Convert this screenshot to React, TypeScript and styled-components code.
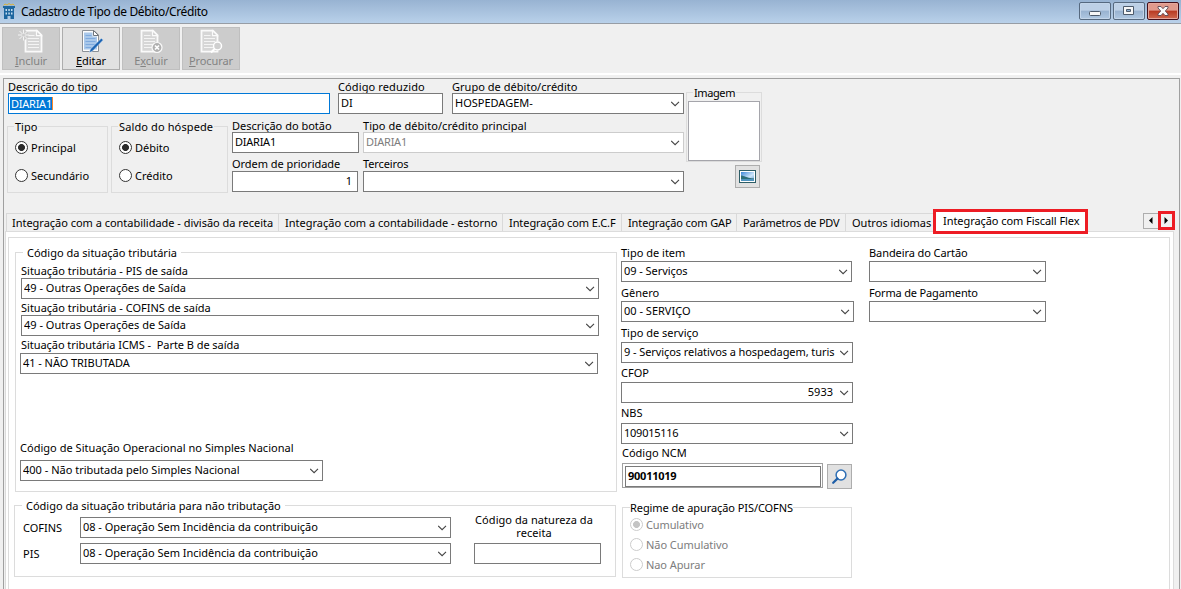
import React from 'react';
import styled, { createGlobalStyle, css } from 'styled-components';

const Global = createGlobalStyle`
  *, *::before, *::after { box-sizing: border-box; }
  html, body { margin: 0; padding: 0; overflow: hidden; }
  body { font: 11px/14px "Noto Sans", "Open Sans", sans-serif; color: #000; background: #f0f0f0; }
`;

const Window = styled.div`
  width: 1181px;
  height: 589px;
  overflow: hidden;
  display: flex;
  flex-direction: column;
  background: #f0f0f0;
`;

const TitleBar = styled.header`
  height: 24px;
  flex: none;
  display: flex;
  align-items: flex-start;
  padding: 2px 2px 0 3px;
  background: linear-gradient(#98b3d2, #b9d1ea);
  border-bottom: 1px solid #979da5;
`;

const Title = styled.h1`
  margin: 0 auto 0 6px;
  font-size: 12px;
  line-height: 20px;
  font-weight: 400;
  letter-spacing: -0.36px;
`;

const CaptionButton = styled.button<{ $close?: boolean }>`
  width: 32px;
  height: 18px;
  margin-left: 2px;
  padding: 0;
  display: flex;
  align-items: center;
  justify-content: center;
  border: 1px solid ${p => (p.$close ? '#43101a' : '#56697f')};
  border-radius: 2px;
  box-shadow: inset 0 0 0 1px ${p => (p.$close ? '#e5a79c' : '#c3d5e9')};
  background: ${p => (p.$close
    ? 'linear-gradient(#e09a8c 0 45%, #b83a22 50%, #cf6a50)'
    : 'linear-gradient(#bdd0e6 0 45%, #98b2d0 50%, #b0c8e2)')};
`;

const Toolbar = styled.nav`
  height: 49px;
  flex: none;
  display: flex;
  gap: 2px;
  padding: 3px 2px;
`;

const ToolButton = styled.button<{ $off?: boolean }>`
  width: 58px;
  height: 43px;
  padding: 1px 0 0;
  display: flex;
  flex-direction: column;
  align-items: center;
  font: inherit;
  letter-spacing: -0.1px;
  border: 1px solid ${p => (p.$off ? '#bfbfbf' : '#adadad')};
  background: ${p => (p.$off ? '#cccccc' : '#e1e1e1')};
  color: ${p => (p.$off ? '#838383' : '#000')};
  svg { flex: none; }
`;

const Rule = styled.div`
  height: 2px;
  flex: none;
  background: #fff;
`;

const Body = styled.main`
  flex: 1;
  min-height: 0;
  margin: 3px 1px 0 3px;
  border: 1px solid #a0a0a0;
  border-bottom: 0;
  display: flex;
  flex-direction: column;
`;

const FormHead = styled.section`
  height: 134px;
  flex: none;
  display: flex;
  padding: 1px 0 0 4px;
`;

const Col = styled.div<{ $w?: number; $ml?: number; $mt?: number }>`
  display: flex;
  flex-direction: column;
  align-items: flex-start;
  flex: none;
  width: ${p => (p.$w ? `${p.$w}px` : 'auto')};
  margin-left: ${p => p.$ml ?? 0}px;
  margin-top: ${p => p.$mt ?? 0}px;
`;

const Row = styled.div<{ $gap?: number; $mt?: number; $ml?: number }>`
  display: flex;
  align-items: flex-start;
  gap: ${p => p.$gap ?? 0}px;
  margin-top: ${p => p.$mt ?? 0}px;
  margin-left: ${p => p.$ml ?? 0}px;
`;

const Label = styled.label<{ $ls?: number; $gap?: number; $ml?: number }>`
  display: block;
  height: 13px;
  line-height: 13px;
  white-space: pre;
  letter-spacing: ${p => p.$ls ?? 0}px;
  margin-bottom: ${p => p.$gap ?? 0}px;
  margin-left: ${p => p.$ml ?? 0}px;
`;

const Box = styled.div<{ $w: number; $focus?: boolean; $off?: boolean; $right?: boolean; $ls?: number; $bold?: boolean }>`
  width: ${p => p.$w}px;
  height: 21px;
  flex: none;
  display: flex;
  align-items: center;
  padding: 0 ${p => (p.$right ? 5 : 3)}px 1px 2px;
  background: #fff;
  border: 1px solid ${p => (p.$focus ? '#0078d7' : p.$off ? '#cccccc' : '#7a7a7a')};
  color: ${p => (p.$off ? '#7d7d7d' : '#000')};
  letter-spacing: ${p => p.$ls ?? 0}px;
  white-space: pre;
  ${p => p.$right && css`justify-content: flex-end;`}
  ${p => p.$bold && css`font-weight: 700;`}
  svg { flex: none; margin-top: 1px; }
`;

const Value = styled.span<{ $right?: boolean }>`
  flex: 1;
  min-width: 0;
  overflow: hidden;
  text-align: ${p => (p.$right ? 'right' : 'left')};
  padding-right: ${p => (p.$right ? 7 : 0)}px;
`;

const Selection = styled.span`
  height: 13px;
  line-height: 13px;
  padding-left: 1px;
  margin-left: -1px;
  color: #fff;
  background: #0078d7;
  border-right: 1px solid #ff8728;
`;

const Group = styled.fieldset<{ $w: number; $h: number; $ml?: number; $mt?: number }>`
  width: ${p => p.$w}px;
  height: ${p => p.$h}px;
  min-width: 0;
  flex: none;
  margin: ${p => p.$mt ?? 0}px 0 0 ${p => p.$ml ?? 0}px;
  padding: 0;
  border: 1px solid #dcdcdc;
  display: flex;
  flex-direction: column;
  align-items: flex-start;
`;

const Legend = styled.div<{ $bg: string; $pad: number; $ml: number; $ls?: number }>`
  height: 14px;
  line-height: 14px;
  flex: none;
  margin: -7px 0 0 ${p => p.$ml}px;
  padding: 0 ${p => p.$pad}px;
  background: ${p => p.$bg};
  white-space: pre;
  letter-spacing: ${p => p.$ls ?? 0}px;
`;

const RadioRow = styled.label<{ $mt: number; $off?: boolean; $ls?: number }>`
  display: flex;
  align-items: center;
  gap: 3px;
  height: 13px;
  line-height: 13px;
  margin: ${p => p.$mt}px 0 0 7px;
  color: ${p => (p.$off ? '#7d7d7d' : '#000')};
  letter-spacing: ${p => p.$ls ?? 0}px;
`;

const Dot = styled.span<{ $on?: boolean; $off?: boolean }>`
  width: 13px;
  height: 13px;
  flex: none;
  border-radius: 50%;
  border: 1px solid ${p => (p.$off ? '#cccccc' : '#333333')};
  background: ${p => (p.$on ? `radial-gradient(circle, ${p.$off ? '#c4c4c4' : '#2b2b2b'} 3.1px, #fff 3.8px)` : '#fff')};
`;

const Picture = styled.div`
  width: 72px;
  height: 60px;
  margin: 1px 0 0 1px;
  flex: none;
  background: #fff;
  border: 1px solid #a5a5ab;
`;

const SquareButton = styled.button<{ $h?: number; $ml?: number; $mt?: number }>`
  width: 25px;
  height: ${p => p.$h ?? 25}px;
  margin: ${p => p.$mt ?? 0}px 0 0 ${p => p.$ml ?? 0}px;
  padding: 0;
  display: flex;
  align-items: center;
  justify-content: center;
  background: #e1e1e1;
  border: 1px solid #adadad;
`;

const TabStrip = styled.div`
  height: 18px;
  flex: none;
  display: flex;
  align-items: flex-start;
  margin: 0 4px 0 2px;
`;

const Tab = styled.div<{ $w: number; $ls?: number; $pad?: number }>`
  width: ${p => p.$w}px;
  height: 18px;
  flex: none;
  padding-left: ${p => p.$pad ?? 6}px;
  padding-top: 2px;
  border-top: 1px solid #d9d9d9;
  border-left: 1px solid #d9d9d9;
  letter-spacing: ${p => p.$ls ?? 0}px;
  white-space: pre;
`;

const ActiveTab = styled.div`
  width: 155px;
  height: 25px;
  flex: none;
  margin: -4px 55px 0 -1px;
  position: relative;
  z-index: 1;
  padding: 2px 0 0 7px;
  border: 3px solid #ed1c24;
  background: #fff;
  letter-spacing: -0.06px;
  white-space: pre;
`;

const Spin = styled.button<{ $marked?: boolean }>`
  width: ${p => (p.$marked ? 17 : 15)}px;
  height: ${p => (p.$marked ? 19 : 16)}px;
  margin-top: ${p => (p.$marked ? -2 : 0)}px;
  padding: 0 1px 0 0;
  flex: none;
  display: flex;
  align-items: center;
  justify-content: center;
  background: #f0f0f0;
  border: ${p => (p.$marked ? '3px solid #ed1c24' : '1px solid #adadad')};
  border-right-width: ${p => (p.$marked ? 3 : 0)}px;
  svg { margin-top: -1px; }
`;

const Page = styled.section`
  flex: 1;
  min-height: 0;
  margin: 0 5px 0 1px;
  padding: 5px 3px 0 2px;
  background: #fff;
  border: 1px solid #dcdcdc;
  border-bottom: 0;
  display: flex;
`;

const Sheet = styled.div`
  flex: 1;
  min-width: 0;
  display: flex;
  align-items: flex-start;
  border: 1px solid #dcdcdc;
  border-bottom: 0;
`;

const Centered = styled.div`
  width: 127px;
  height: 26px;
  margin-bottom: 4px;
  padding-right: 7px;
  line-height: 13px;
  text-align: center;
  letter-spacing: 0.06px;
  white-space: pre;
`;

const NcmFrame = styled.div`
  width: 201px;
  height: 25px;
  padding: 2px 0 0 2px;
  border: 1px solid #a0a0a0;
`;

const Chevron = () => (
  <svg width="9" height="6" viewBox="0 0 9 6">
    <path d="M0.200 0.800 L4.100 4.700 L8 0.800" fill="none" stroke="#444" strokeWidth="1.100" />
  </svg>
);

const Combo = ({ w, value = '', off, right, ls }: { w: number; value?: string; off?: boolean; right?: boolean; ls?: number }) => (
  <Box $w={w} $off={off} $ls={ls}>
    <Value $right={right}>{value}</Value>
    <Chevron />
  </Box>
);

const Radio = ({ text, on, off, mt, ls }: { text: string; on?: boolean; off?: boolean; mt: number; ls?: number }) => (
  <RadioRow $mt={mt} $off={off} $ls={ls}>
    <Dot $on={on} $off={off} />
    {text}
  </RadioRow>
);

const BuildingIcon = () => (
  <svg width="12" height="17" viewBox="0 0 12 17">
    <path d="M0.500 3.500 L2 2 L4 3 L6 1.500 L8 3 L10 2 L11.500 3.500" fill="none" stroke="#d8b23c" strokeWidth="1" />
    <path d="M0 4h12v2h-1v11H7.500v-3h-3v3H1V6H0z" fill="#1d669f" />
    <path d="M2.500 7h1.500v2H2.500zM5.300 7h1.500v2H5.300zM8 7h1.500v2H8zM2.500 10.500h1.500v2H2.500zM5.300 10.500h1.500v2H5.300zM8 10.500h1.500v2H8z" fill="#c5dcf0" />
  </svg>
);

const ActiveDoc = () => (
  <svg width="28" height="25" viewBox="0 0 28 25">
    <path d="M5.500 1.500h11.500l4.500 4.500v16.500H5.500z" fill="#fdfdfd" stroke="#8b9096" />
    <path d="M7 3.500h8.500v4h4.500V20.500H7z" fill="#a9c8ea" />
    <path d="M16.500 1.500v5H21.500z" fill="#fff" stroke="#6f757c" />
    <path d="M8.500 6.500h6M8.500 9.500h10M8.500 12.500h10M8.500 15.500h10M8.500 18.500h6" stroke="#7faade" />
    <path d="M12 23.800l1.500-3.800L24.300 9.200l2 1.800L15.700 22z" fill="#1e66b4" stroke="#e9f1fa" strokeWidth="0.500" />
  </svg>
);

const MutedDoc = ({ shift = 0, children }: { shift?: number; children?: React.ReactNode }) => (
  <svg width="28" height="25" viewBox="0 0 28 25">
    <g transform={`translate(${shift} 0)`}>
      <path d="M4.500 1.700h11.500l4.500 4.500v16.500h-16z" fill="#d6d6d6" stroke="#fafafa" strokeWidth="1.800" />
      <path d="M15.500 1.700v5h5z" fill="#d0d0d0" stroke="#fafafa" strokeWidth="1.200" />
      <path d="M7 6.500h6.500M7 9.500h11M7 12.500h11M7 15.500h11M7 18.500h11" stroke="#f4f4f4" />
    </g>
    {children}
  </svg>
);

const PictureIcon = () => (
  <svg width="17" height="13" viewBox="0 0 17 13">
    <defs>
      <linearGradient id="sky" x1="0" y1="0" x2="1" y2="1">
        <stop offset="0" stopColor="#3b86d8" />
        <stop offset="0.600" stopColor="#cfe6fa" />
        <stop offset="1" stopColor="#5a9ad0" />
      </linearGradient>
    </defs>
    <rect x="0.500" y="0.500" width="16" height="12" fill="#fff" stroke="#2d5d66" />
    <rect x="2" y="2" width="13" height="9" fill="url(#sky)" />
    <path d="M2 5.500c3 0 5 2.500 13 3V11H2z" fill="#2c6e78" />
    <path d="M2 9h13v2H2z" fill="#4f93bd" />
  </svg>
);

const LensIcon = () => (
  <svg width="15" height="15" viewBox="0 0 15 15">
    <circle cx="9" cy="6" r="4.900" fill="#fff" stroke="#2e6fb5" strokeWidth="1.500" />
    <path d="M5.400 9.600L1.200 13.800" stroke="#1f5fa8" strokeWidth="2.200" strokeLinecap="round" />
  </svg>
);

export default function App() {
  return (
    <Window>
      <Global />
      <TitleBar>
        <BuildingIcon />
        <Title>Cadastro de Tipo de Débito/Crédito</Title>
        <CaptionButton>
          <svg width="12" height="14" viewBox="0 0 12 14"><rect x="0.500" y="7.500" width="11" height="4" rx="1" fill="#f7f7f7" stroke="#4d5a6b" /></svg>
        </CaptionButton>
        <CaptionButton>
          <svg width="12" height="10" viewBox="0 0 12 10"><path d="M0.500 0.500h10v8h-10z" fill="#f7f7f7" stroke="#4d5a6b" /><path d="M3.500 3.500h4v2h-4z" fill="#8fb0d4" stroke="#4d5a6b" /></svg>
        </CaptionButton>
        <CaptionButton $close>
          <svg width="12" height="10" viewBox="0 0 12 10"><path d="M1 0.500h3L6 2.700 8 0.500h3v1.500L8.300 5 11 8v1.500H8L6 7.300 4 9.500H1V8L3.700 5 1 2z" fill="#fafafa" stroke="#5c4650" strokeWidth="0.900" /></svg>
        </CaptionButton>
      </TitleBar>
      <Toolbar>
        <ToolButton $off>
          <MutedDoc shift={4}>
            <circle cx="6.500" cy="6" r="5" fill="#ccc" />
            <path d="M6.500 0.500v11M1 6h11M2.500 2l8 8M10.500 2l-8 8" stroke="#f4f4f4" />
            <circle cx="6.500" cy="6" r="1.500" fill="#ccc" />
          </MutedDoc>
          <span><u>I</u>ncluir</span>
        </ToolButton>
        <ToolButton>
          <ActiveDoc />
          <span><u>E</u>ditar</span>
        </ToolButton>
        <ToolButton $off>
          <MutedDoc><circle cx="20" cy="18.500" r="5" fill="#b0b0b0" stroke="#fafafa" strokeWidth="1.200" /><path d="M18 16.500l4 4M22 16.500l-4 4" stroke="#fff" strokeWidth="1.700" /></MutedDoc>
          <span>E<u>x</u>cluir</span>
        </ToolButton>
        <ToolButton $off>
          <MutedDoc><circle cx="20.500" cy="17" r="4.800" fill="#ccc" /><circle cx="20.500" cy="17" r="4" fill="#cfcfcf" stroke="#fff" strokeWidth="1.500" /><path d="M17.500 20l-3.500 3.500" stroke="#fff" strokeWidth="2" /></MutedDoc>
          <span><u>P</u>rocurar</span>
        </ToolButton>
      </Toolbar>
      <Rule />
      <Body>
        <FormHead>
          <Col $w={676}>
            <Row>
              <Col $w={322}>
                <Label>Descrição do tipo</Label>
                <Box $w={322} $focus $ls={-0.25}><Selection>DIARIA1</Selection></Box>
              </Col>
              <Col $ml={8}>
                <Label $ls={0.12}>Código reduzido</Label>
                <Box $w={105}>DI</Box>
              </Col>
              <Col $ml={9}>
                <Label $ls={0.03}>Grupo de débito/crédito</Label>
                <Combo w={232} value="HOSPEDAGEM-" />
              </Col>
            </Row>
            <Row>
              <Group $w={101} $h={67} $ml={-1} $mt={12}>
                <Legend $bg="#f0f0f0" $pad={1} $ml={6}>Tipo</Legend>
                <Radio text="Principal" on mt={7} />
                <Radio text="Secundário" mt={15} />
              </Group>
              <Group $w={117} $h={67} $ml={3} $mt={12}>
                <Legend $bg="#f0f0f0" $pad={1} $ml={6} $ls={0.12}>Saldo do hóspede</Legend>
                <Radio text="Débito" on mt={7} />
                <Radio text="Crédito" mt={15} />
              </Group>
              <Col $ml={4} $mt={5}>
                <Label>Descrição do botão</Label>
                <Box $w={127} $ls={-0.25}>DIARIA1</Box>
                <Row $mt={4}><Label $gap={1} $ls={-0.04}>Ordem de prioridade</Label></Row>
                <Box $w={126} $right>1</Box>
              </Col>
              <Col $ml={4} $mt={5}>
                <Label $ls={0.05}>Tipo de débito/crédito principal</Label>
                <Combo w={321} value="DIARIA1" off ls={-0.25} />
                <Row $mt={4}><Label $gap={1} $ls={-0.12}>Terceiros</Label></Row>
                <Combo w={321} />
              </Col>
            </Row>
          </Col>
          <Col $ml={2}>
            <Group $w={76} $h={70} $mt={12}>
              <Legend $bg="#f0f0f0" $pad={1} $ml={6} $ls={-0.4}>Imagem</Legend>
              <Picture />
            </Group>
            <SquareButton $h={23} $ml={49} $mt={3}><PictureIcon /></SquareButton>
          </Col>
        </FormHead>
        <TabStrip>
          <Tab $w={272} $ls={-0.02} $pad={5}>Integração com a contabilidade - divisão da receita</Tab>
          <Tab $w={224}>Integração com a contabilidade - estorno</Tab>
          <Tab $w={119} $ls={-0.08}>Integração com E.C.F</Tab>
          <Tab $w={115} $ls={-0.12}>Integração com GAP</Tab>
          <Tab $w={109} $ls={-0.2}>Parâmetros de PDV</Tab>
          <Tab $w={89}>Outros idiomas</Tab>
          <ActiveTab>Integração com Fiscall Flex</ActiveTab>
          <Spin><svg width="4" height="7" viewBox="0 0 4 7"><path d="M3.500 0v7L0 3.500z" /></svg></Spin>
          <Spin $marked><svg width="4" height="7" viewBox="0 0 4 7"><path d="M0.500 0v7L4 3.500z" /></svg></Spin>
        </TabStrip>
        <Page>
          <Sheet>
            <Col $w={602} $ml={5}>
              <Group $w={602} $h={240} $ml={1} $mt={14}>
                <Legend $bg="#fff" $pad={4} $ml={7}>Código da situação tributária</Legend>
                <Col $ml={4} $mt={4}>
                  <Label $ml={1} $gap={1}>Situação tributária - PIS de saída</Label>
                  <Row $ml={1}><Combo w={578} value="49 - Outras Operações de Saída" /></Row>
                  <Row $mt={2} $ml={1}><Label $gap={1}>Situação tributária - COFINS de saída</Label></Row>
                  <Row $ml={1}><Combo w={578} value="49 - Outras Operações de Saída" /></Row>
                  <Row $mt={2} $ml={1}><Label $gap={2} $ls={-0.05}>Situação tributária ICMS -  Parte B de saída</Label></Row>
                  <Combo w={578} value="41 - NÃO TRIBUTADA" ls={-0.05} />
                  <Row $mt={67}><Label $gap={6} $ls={0.03}>Código de Situação Operacional no Simples Nacional</Label></Row>
                  <Combo w={303} value="400 - Não tributada pelo Simples Nacional" />
                </Col>
              </Group>
              <Group $w={602} $h={72} $mt={13}>
                <Legend $bg="#fff" $pad={4} $ml={7}>Código da situação tributária para não tributação</Legend>
                <Row $ml={8} $mt={4}>
                  <Col $w={57} $mt={4}>
                    <Label $gap={13}>COFINS</Label>
                    <Label>PIS</Label>
                  </Col>
                  <Col>
                    <Combo w={371} value="08 - Operação Sem Incidência da contribuição" ls={-0.03} />
                    <Row $mt={5}><Combo w={371} value="08 - Operação Sem Incidência da contribuição" ls={-0.03} /></Row>
                  </Col>
                  <Col $ml={23} $mt={-4}>
                    <Centered>{'Código da natureza da\nreceita'}</Centered>
                    <Box $w={127} />
                  </Col>
                </Row>
              </Group>
            </Col>
            <Col $w={233} $ml={5} $mt={8}>
              <Label $gap={2}>Tipo de item</Label>
              <Combo w={231} value="09 - Serviços" ls={-0.06} />
              <Row $mt={4}><Label $gap={2}>Gênero</Label></Row>
              <Combo w={233} value="00 - SERVIÇO" />
              <Row $mt={4}><Label $gap={3}>Tipo de serviço</Label></Row>
              <Combo w={232} value="9 - Serviços relativos a hospedagem, turis" ls={-0.08} />
              <Row $mt={3}><Label $gap={3}>CFOP</Label></Row>
              <Combo w={232} value="5933" right />
              <Row $mt={3}><Label $gap={4}>NBS</Label></Row>
              <Combo w={232} value="109015116" ls={-0.25} />
              <Row $mt={2} $ml={1}><Label $gap={4}>Código NCM</Label></Row>
              <Row $ml={1} $gap={4}>
                <NcmFrame><Box $w={196} $bold $ls={-0.25}>90011019</Box></NcmFrame>
                <SquareButton $mt={1}><LensIcon /></SquareButton>
              </Row>
              <Group $w={230} $h={71} $ml={1} $mt={18}>
                <Legend $bg="#fff" $pad={0} $ml={7} $ls={-0.07}>Regime de apuração PIS/COFNS</Legend>
                <Radio text="Cumulativo" on off mt={3} ls={-0.12} />
                <Radio text="Não Cumulativo" off mt={7} ls={-0.06} />
                <Radio text="Nao Apurar" off mt={7} ls={-0.08} />
              </Group>
            </Col>
            <Col $ml={15} $mt={8}>
              <Label $gap={2} $ls={-0.08}>Bandeira do Cartão</Label>
              <Combo w={177} />
              <Row $mt={4}><Label $gap={2} $ls={-0.16}>Forma de Pagamento</Label></Row>
              <Combo w={177} />
            </Col>
          </Sheet>
        </Page>
      </Body>
    </Window>
  );
}
